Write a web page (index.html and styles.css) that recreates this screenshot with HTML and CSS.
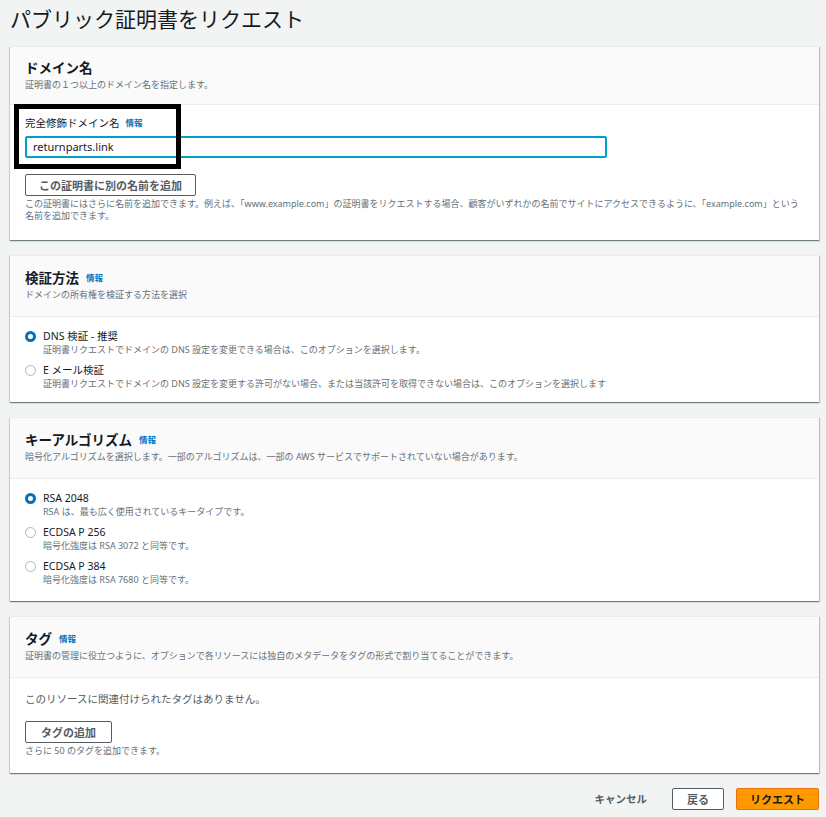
FILE: index.html
```html
<!DOCTYPE html>
<html lang="ja">
<head>
<meta charset="utf-8">
<title>パブリック証明書をリクエスト</title>
<link rel="stylesheet" href="styles.css">
</head>
<body>
<div class="page">
  <h1 class="page-title">パブリック証明書をリクエスト</h1>

  <section class="card card-first">
    <div class="card-header card-header-tight">
      <h2 class="card-title">ドメイン名</h2>
      <p class="card-desc">証明書の１つ以上のドメイン名を指定します。</p>
    </div>
    <div class="card-body body-domain">
      <div class="field-label">完全修飾ドメイン名 <a class="info">情報</a></div>
      <div class="input">returnparts.link</div>
      <button class="btn btn-add-name">この証明書に別の名前を追加</button>
      <p class="help">この証明書にはさらに名前を追加できます。例えば、「www.example.com」の証明書をリクエストする場合、顧客がいずれかの名前でサイトにアクセスできるように、「example.com」という<br>名前を追加できます。</p>
    </div>
    <div class="annotation"></div>
  </section>

  <section class="card">
    <div class="card-header">
      <h2 class="card-title">検証方法 <a class="info">情報</a></h2>
      <p class="card-desc">ドメインの所有権を検証する方法を選択</p>
    </div>
    <div class="card-body body-radios">
      <div class="option">
        <span class="radio checked"></span>
        <div class="option-text">
          <div class="option-label">DNS 検証 - 推奨</div>
          <div class="option-desc">証明書リクエストでドメインの DNS 設定を変更できる場合は、このオプションを選択します。</div>
        </div>
      </div>
      <div class="option">
        <span class="radio"></span>
        <div class="option-text">
          <div class="option-label">E メール検証</div>
          <div class="option-desc">証明書リクエストでドメインの DNS 設定を変更する許可がない場合、または当該許可を取得できない場合は、このオプションを選択します</div>
        </div>
      </div>
    </div>
  </section>

  <section class="card">
    <div class="card-header">
      <h2 class="card-title">キーアルゴリズム <a class="info">情報</a></h2>
      <p class="card-desc">暗号化アルゴリズムを選択します。一部のアルゴリズムは、一部の AWS サービスでサポートされていない場合があります。</p>
    </div>
    <div class="card-body body-radios body-radios-3">
      <div class="option">
        <span class="radio checked"></span>
        <div class="option-text">
          <div class="option-label">RSA 2048</div>
          <div class="option-desc">RSA は、最も広く使用されているキータイプです。</div>
        </div>
      </div>
      <div class="option">
        <span class="radio"></span>
        <div class="option-text">
          <div class="option-label">ECDSA P 256</div>
          <div class="option-desc">暗号化強度は RSA 3072 と同等です。</div>
        </div>
      </div>
      <div class="option">
        <span class="radio"></span>
        <div class="option-text">
          <div class="option-label">ECDSA P 384</div>
          <div class="option-desc">暗号化強度は RSA 7680 と同等です。</div>
        </div>
      </div>
    </div>
  </section>

  <section class="card">
    <div class="card-header">
      <h2 class="card-title">タグ <a class="info">情報</a></h2>
      <p class="card-desc">証明書の管理に役立つように、オプションで各リソースには独自のメタデータをタグの形式で割り当てることができます。</p>
    </div>
    <div class="card-body body-tags">
      <p class="empty">このリソースに関連付けられたタグはありません。</p>
      <button class="btn btn-tag">タグの追加</button>
      <p class="help">さらに 50 のタグを追加できます。</p>
    </div>
  </section>

  <div class="footer">
    <button class="btn-link">キャンセル</button>
    <button class="btn btn-back">戻る</button>
    <button class="btn btn-primary">リクエスト</button>
  </div>
</div>
</body>
</html>
```

FILE: styles.css
```css
* { box-sizing: border-box; }

html, body {
  margin: 0;
  padding: 0;
  background: #f2f3f3;
}

body {
  font-family: "Noto Sans", "Noto Sans CJK JP", sans-serif;
  color: #16191f;
}

.page {
  padding: 4px 7px 0 10px;
}

.page-title {
  margin: 0 0 12px 0;
  font-size: 21px;
  line-height: 30px;
  font-weight: 400;
  color: #16191f;
}

.card {
  position: relative;
  background: #ffffff;
  border-top: 1px solid #eaeded;
  box-shadow: 0 1px 1px 0 rgba(0, 28, 36, 0.35), 1px 1px 1px 0 rgba(0, 28, 36, 0.2), -1px 1px 1px 0 rgba(0, 28, 36, 0.12);
  margin-bottom: 15px;
}

.card-header {
  background: #fafafa;
  border-bottom: 1px solid #eaeded;
  padding: 11px 15px 15px;
}

.card-header-tight {
  padding: 10px 15px 13px;
}

.card-title {
  margin: 0;
  font-size: 13.5px;
  line-height: 22px;
  font-weight: 700;
  color: #16191f;
  display: flex;
  align-items: center;
  gap: 7px;
}

.info {
  font-size: 8.5px;
  font-weight: 700;
  color: #0073bb;
  text-decoration: none;
}

.card-desc {
  margin: 0;
  font-size: 9px;
  line-height: 12px;
  color: #687078;
}

.card-body {
  padding: 12px 15px 16px;
}

.body-domain {
  padding: 10px 15px 18px;
}

.field-label {
  font-size: 10.5px;
  line-height: 16px;
  display: flex;
  align-items: center;
  gap: 6px;
}

.input {
  margin-top: 5px;
  width: 582px;
  height: 22px;
  border: 2px solid #00a1c9;
  border-radius: 2px;
  padding: 0 6px;
  font-size: 11px;
  line-height: 18px;
  color: #16191f;
}

.btn {
  display: inline-block;
  font-family: inherit;
  background: #ffffff;
  border: 1px solid #545b64;
  border-radius: 2px;
  color: #545b64;
  font-weight: 700;
  font-size: 11px;
  line-height: 19px;
  height: 22px;
  padding: 0 15px;
}

.btn-add-name {
  margin-top: 16px;
  display: block;
  padding: 0 13px;
}

.help {
  margin: 2px 0 0 0;
  font-size: 9px;
  line-height: 12px;
  color: #687078;
}

.annotation {
  position: absolute;
  left: 4px;
  top: 57px;
  width: 167px;
  height: 65px;
  border: 5px solid #000000;
  pointer-events: none;
}

.body-radios {
  padding: 12px 15px 12px;
  display: flex;
  flex-direction: column;
  gap: 7px;
}

.body-radios-3 {
  padding-bottom: 15px;
}

.option {
  display: flex;
  align-items: flex-start;
  gap: 7px;
}

.radio {
  flex: none;
  width: 11px;
  height: 11px;
  margin-top: 2px;
  border-radius: 50%;
  border: 1px solid #aab7b8;
  background: #ffffff;
}

.radio.checked {
  border: 3.5px solid #0073bb;
}

.option-label {
  font-size: 10.5px;
  line-height: 14px;
  color: #16191f;
}

.option-desc {
  font-size: 9px;
  line-height: 13px;
  color: #687078;
}

.body-tags {
  padding: 13px 15px 16px;
}

.empty {
  margin: 0;
  font-size: 10.5px;
  line-height: 16px;
  color: #545b64;
}

.btn-tag {
  display: block;
  margin-top: 14px;
  padding: 0 15px;
}

.footer {
  display: flex;
  justify-content: flex-end;
  align-items: center;
  gap: 12px;
}

.btn-link {
  font-family: inherit;
  background: transparent;
  border: none;
  color: #545b64;
  font-weight: 700;
  font-size: 10.5px;
  line-height: 22px;
  height: 22px;
  padding: 0 13px;
}

.btn-back {
  padding: 0 14px;
}

.btn-primary {
  background: #ff9900;
  border-color: #ec7211;
  color: #16191f;
  padding: 0 13px;
}
```
